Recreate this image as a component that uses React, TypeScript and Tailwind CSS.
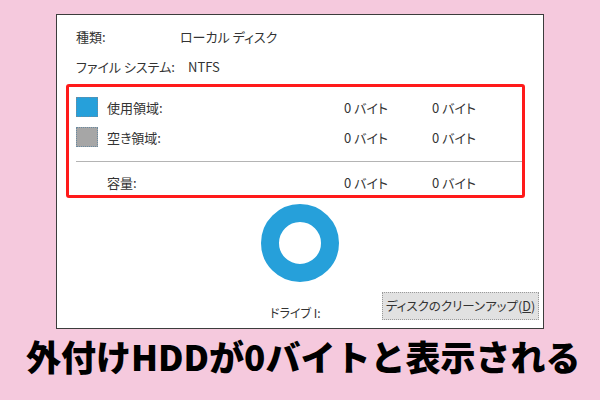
import React from "react";

const font = { fontFamily: '"Noto Sans CJK JP", "Noto Sans", sans-serif' };

function Swatch({ color }: { color: string }) {
  return <div className={`w-[22px] h-[20px] border border-dotted border-[#6b8aa0] ${color}`} />;
}

function Row({ swatch, label }: { swatch?: React.ReactNode; label: string }) {
  return (
    <div className="flex items-center h-[20px]">
      <div className="w-[22px] ml-[7px]">{swatch}</div>
      <div className="ml-[9px] w-[237px]">{label}</div>
      <div className="w-[88px]">0 バイト</div>
      <div>0 バイト</div>
    </div>
  );
}

export default function App() {
  return (
    <div
      className="w-[600px] h-[400px] bg-[#f5c9dd] flex flex-col overflow-hidden"
      style={font}
    >
      <div className="ml-[56px] mt-[14px] w-[488px] h-[315px] bg-white border border-[#3c3c3c] flex flex-col text-[13px] text-[#333] [font-feature-settings:'palt'] leading-none">
        <div className="mt-[11px] h-[20px] flex items-center">
          <div className="ml-[19px] w-[104px]">種類:</div>
          <div>ローカル ディスク</div>
        </div>
        <div className="mt-[10px] h-[20px] flex items-center">
          <div className="ml-[19px] w-[112px]">ファイル システム:</div>
          <div>NTFS</div>
        </div>
        <div className="mt-[8px] ml-[9px] w-[459px] h-[114px] border-[3px] border-[#ff1a1a] rounded-[3px] flex flex-col">
          <div className="mt-[10px]">
            <Row swatch={<Swatch color="bg-[#26a0da]" />} label="使用領域:" />
          </div>
          <div className="mt-[10px]">
            <Row swatch={<Swatch color="bg-[#a6a6a6]" />} label="空き領域:" />
          </div>
          <div className="mt-[14px] ml-[7px] h-px bg-[#b4b4b4]" />
          <div className="mt-[10px]">
            <Row label="容量:" />
          </div>
        </div>
        <div className="mt-[6px] flex justify-center">
          <svg width="78" height="78" viewBox="0 0 78 78">
            <circle cx="39" cy="39" r="30" fill="none" stroke="#26a0da" strokeWidth="18" />
          </svg>
        </div>
        <div className="mt-[10px] flex items-start">
          <div className="ml-[213px] mt-[15px] text-[12px]">ドライブ I:</div>
          <div className="ml-auto mr-[4px] w-[157px] h-[28px] bg-[#e1e1e1] border border-dotted border-[#9a9a9a] flex items-center justify-center text-[12.5px] text-[#333] whitespace-nowrap">
            <span>
              ディスクのクリーンアップ(<span className="underline">D</span>)
            </span>
          </div>
        </div>
      </div>
      <div className="mt-[9px] ml-[26px] h-[36px] text-[35px] leading-none font-black text-black whitespace-nowrap">
        外付けHDDが0バイトと表示される
      </div>
    </div>
  );
}
